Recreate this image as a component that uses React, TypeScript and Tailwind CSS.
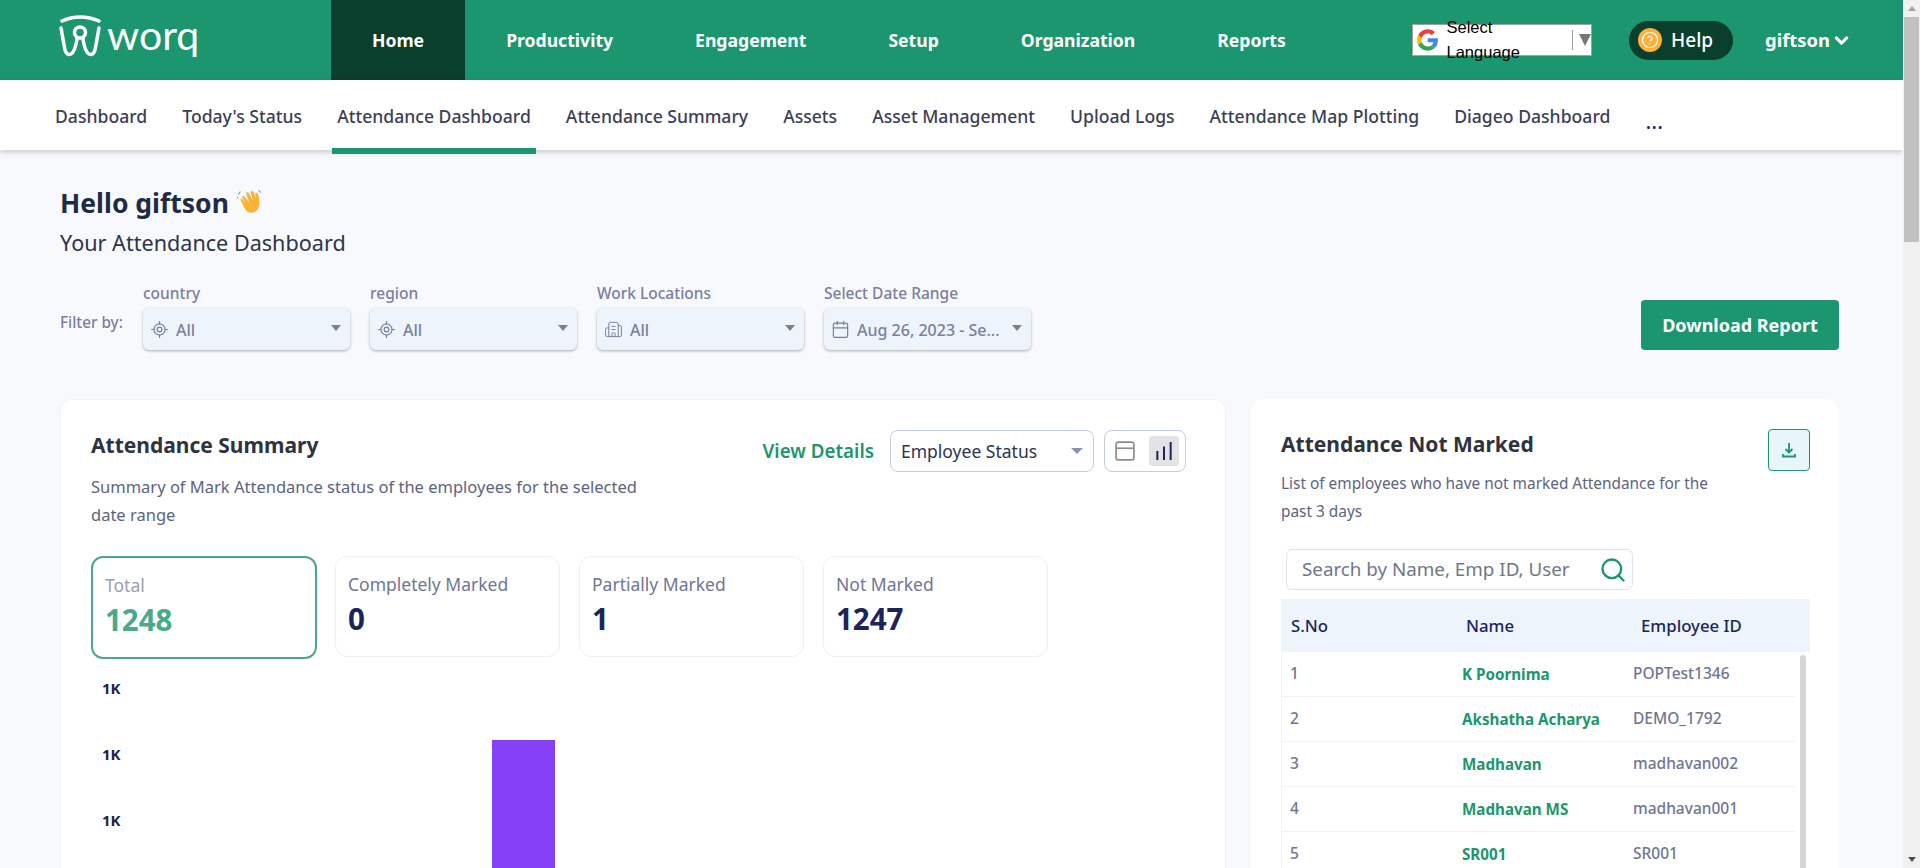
import React from 'react';
import { Building2, Calendar, ChevronDown, CircleHelp, LocateFixed, Search } from 'lucide-react';

const mainTabs = ['Productivity', 'Engagement', 'Setup', 'Organization', 'Reports'];
const subTabs = ['Dashboard', "Today's Status", 'Attendance Dashboard', 'Attendance Summary', 'Assets', 'Asset Management', 'Upload Logs', 'Attendance Map Plotting', 'Diageo Dashboard'];
const stats = [
  { label: 'Completely Marked', value: '0' },
  { label: 'Partially Marked', value: '1' },
  { label: 'Not Marked', value: '1247' },
];
const rows = [
  { no: 1, name: 'K Poornima', id: 'POPTest1346' },
  { no: 2, name: 'Akshatha Acharya', id: 'DEMO_1792' },
  { no: 3, name: 'Madhavan', id: 'madhavan002' },
  { no: 4, name: 'Madhavan MS', id: 'madhavan001' },
  { no: 5, name: 'SR001', id: 'SR001' },
];

const Caret = () => <span className="w-0 h-0 border-x-[5px] border-x-transparent border-t-[6px] border-t-[#808080]" />;

const Logo = () => (
  <div className="flex items-start w-[331px] pl-[58px]">
    <svg width="44" height="46" viewBox="0 0 44 46" fill="none" stroke="white" strokeWidth="3.5" strokeLinecap="round" className="mt-[14px]">
      <path d="M4 7 Q22 -1 41 7" />
      <path d="M3 14 L7 36 Q9 42 13 40 Q17 38 19 25" />
      <path d="M25 25 Q27 38 31 40 Q35 42 37 36 L41 14" />
      <circle cx="22" cy="18.500" r="5.500" />
    </svg>
    <span className="ml-[5px] mt-[10px] font-['Lato',sans-serif] text-[41px] leading-[50px] text-white">worq</span>
  </div>
);

const GoogleG = () => (
  <svg width="22" height="22" viewBox="0 0 48 48">
    <path fill="#EA4335" d="M24 9.5c3.5 0 6.7 1.2 9.2 3.600l6.900-6.900C35.900 2.400 30.400 0 24 0 14.600 0 6.500 5.400 2.600 13.200l8 6.200C12.500 13.700 17.800 9.500 24 9.500z" />
    <path fill="#4285F4" d="M46.900 24.500c0-1.600-.1-3.100-.4-4.500H24v9h12.900c-.6 3-2.200 5.500-4.800 7.200l7.700 6c4.500-4.200 7.100-10.300 7.100-17.700z" />
    <path fill="#FBBC05" d="M10.500 28.600c-.5-1.400-.8-3-.8-4.600s.3-3.200.8-4.600l-8-6.200C.9 16.500 0 20.100 0 24s.9 7.500 2.600 10.800l7.900-6.200z" />
    <path fill="#34A853" d="M24 48c6.500 0 11.900-2.100 15.900-5.800l-7.700-6c-2.200 1.500-5 2.300-8.200 2.300-6.200 0-11.500-4.200-13.400-9.900l-8 6.200C6.500 42.600 14.600 48 24 48z" />
  </svg>
);

const Wave = () => (
  <svg width="27" height="27" viewBox="0 0 24 24" className="ml-[7px] mb-[4px]">
    <path fill="#F9B233" d="M7 7 L12 13 L9 5 Q9 3.500 11 4 L15 11 L13 3.500 Q13.500 2 15.500 3 L18 10 L17 5 Q18 3.500 19.500 5 Q21.500 11 20.500 16 Q19 22 13.500 22 Q9.500 22 7.500 17.500 L4 10.500 Q4 9 5.500 9.500 L9 14 L5.500 8 Q5.500 6.500 7 7 Z" />
    <path fill="none" stroke="#9aa3b5" strokeWidth="1" d="M2 6 L4 3 M1 9 L2 8 M20 2 L22 4" />
  </svg>
);

const FilterSelect = ({ label, icon, value }: { label: string; icon: React.ReactNode; value: string }) => (
  <div className="w-[207px]">
    <div className="text-[15.500px] leading-[20px] font-medium text-[#7a7f9d] mb-[5px]">{label}</div>
    <div className="h-[42px] flex items-center pl-[7px] pr-[9px] rounded-[6px] bg-[#edf4fc] shadow-[0_1px_3px_rgba(0,0,0,0.3)] text-[#7a7f9d]">
      {icon}
      <span className="ml-[7px] mt-[2px] text-[16px] font-medium flex-1 whitespace-nowrap">{value}</span>
      <span className="mb-[3px] flex"><Caret /></span>
    </div>
  </div>
);

const StatCard = ({ label, value }: { label: string; value: string }) => (
  <div className="w-[225px] h-[101px] mr-[19px] rounded-[12px] border border-[#eef0f4] px-[12px] pt-[15px]">
    <div className="text-[17.500px] leading-[24px] text-[#6f7694]">{label}</div>
    <div className="text-[29.500px] leading-[36px] font-bold text-[#1b2559] mt-[5px]">{value}</div>
  </div>
);

export default function App() {
  return (
    <div className="flex h-[868px] overflow-hidden font-['Noto_Sans',sans-serif] bg-[#f7f9fd]">
      <div className="flex-1 min-w-0 flex flex-col">
        <header className="h-[80px] shrink-0 flex items-stretch bg-[#1b966e] text-white">
          <Logo />
          <nav className="flex items-stretch text-[17.600px] font-bold">
            <a className="flex items-center px-[41px] bg-[#0a3f2e]">Home</a>
            {mainTabs.map((tab) => (
              <a key={tab} className="flex items-center px-[41px]">{tab}</a>
            ))}
          </nav>
          <div className="ml-auto flex items-center pr-[51px]">
            <div className="h-[32px] w-[180px] flex items-center bg-white border border-[#a0a0a0] pl-[4px] text-black font-['Liberation_Sans',sans-serif] text-[16.500px]">
              <GoogleG />
              <span className="ml-[8px]">Select Language</span>
              <span className="ml-[5px] h-[20px] border-l border-[#a0a0a0]" />
              <span className="ml-[6px] w-0 h-0 border-x-[6px] border-x-transparent border-t-[12px] border-t-[#777]" />
            </div>
            <button className="ml-[37px] h-[39px] w-[104px] rounded-full bg-[#0a3f2e] flex items-center pl-[9px] text-[19px] font-medium">
              <span className="w-[24px] h-[24px] rounded-full bg-[#fbb03b] flex items-center justify-center">
                <CircleHelp size={18} strokeWidth={1.5} color="white" />
              </span>
              <span className="ml-[9px]">Help</span>
            </button>
            <span className="ml-[32px] text-[18.400px] font-bold">giftson</span>
            <ChevronDown size={21} strokeWidth={3.5} className="ml-[1px]" />
          </div>
        </header>

        <div className="h-[70px] shrink-0 flex bg-white shadow-[0_2px_6px_rgba(0,0,0,0.2)] pl-[50px] text-[17.600px] text-[#3a3f55]">
          {subTabs.map((tab) => (
            <a key={tab} className="relative flex items-center px-[5px] mr-[25px] pt-[3px] font-medium">
              {tab}
              {tab === 'Attendance Dashboard' && <span className="absolute left-0 right-0 bottom-[-4px] h-[6px] bg-[#1b966e]" />}
            </a>
          ))}
          <span className="flex items-center mt-[10px] ml-[5px] text-[22px] text-[#1b2559]">...</span>
        </div>

        <main className="flex-1 min-h-0 pl-[60px] pr-[64px] pt-[36px]">
          <div className="flex items-center h-[34px]">
            <h1 className="text-[26.500px] leading-[34px] font-bold text-[#1f2a44]">Hello giftson</h1>
            <Wave />
          </div>
          <div className="text-[21.600px] leading-[28px] mt-[9px] text-[#2f3447]">Your Attendance Dashboard</div>

          <div className="flex items-end mt-[26px]">
            <span className="w-[83px] text-[15.300px] leading-[20px] font-medium text-[#7a7f9d] mb-[18px]">Filter by:</span>
            <div className="flex gap-[20px]">
              <FilterSelect label="country" value="All" icon={<LocateFixed size={19} strokeWidth={1.5} />} />
              <FilterSelect label="region" value="All" icon={<LocateFixed size={19} strokeWidth={1.5} />} />
              <FilterSelect label="Work Locations" value="All" icon={<Building2 size={19} strokeWidth={1.25} />} />
              <FilterSelect label="Select Date Range" value="Aug 26, 2023 - Se..." icon={<Calendar size={19} strokeWidth={1.5} />} />
            </div>
            <button className="ml-auto h-[50px] w-[198px] rounded-[4px] bg-[#1b966e] text-white text-[18px] font-bold">Download Report</button>
          </div>

          <div className="flex gap-[25px] mt-[49px] items-start">
            <section className="w-[1166px] h-[600px] bg-white rounded-[12px] border border-[#f0f2f6] pl-[30px] pr-[39px] pt-[30px]">
              <div className="flex items-start justify-between">
                <div className="w-[560px]">
                  <h2 className="text-[21px] leading-[30px] font-bold text-[#2f3340]">Attendance Summary</h2>
                  <p className="text-[16.500px] leading-[28px] text-[#5c6480] mt-[13px]">Summary of Mark Attendance status of the employees for the selected date range</p>
                </div>
                <div className="flex items-center">
                  <a className="text-[18.800px] font-semibold text-[#1b966e] mr-[16px]">View Details</a>
                  <div className="w-[204px] h-[42px] rounded-[8px] border border-[#c5cde3] flex items-center justify-between pl-[10px] pr-[7px] text-[17.500px] text-[#2b3352]">
                    Employee Status
                    <span className="w-0 h-0 border-x-[6px] border-x-transparent border-t-[6px] border-t-[#8a94b0] mr-[3px]" />
                  </div>
                  <div className="ml-[10px] w-[82px] h-[42px] rounded-[8px] border border-[#c5cde3] flex items-center pl-[10px] gap-[14px]">
                    <svg width="20" height="20" viewBox="0 0 18 18" fill="none" stroke="#8c8c8c" strokeWidth="1.5">
                      <rect x="1" y="1" width="16" height="16" rx="2" />
                      <path d="M1 6.500H17" />
                    </svg>
                    <span className="w-[30px] h-[30px] rounded-[4px] bg-[#e3e3e6] flex items-center justify-center">
                      <svg width="20" height="20" viewBox="0 0 18 18" fill="none" stroke="#1b2559" strokeWidth="1.800">
                        <path d="M3 17V9M9 17V5M15 17V1" />
                      </svg>
                    </span>
                  </div>
                </div>
              </div>

              <div className="flex mt-[27px]">
                <div className="w-[226px] h-[103px] mr-[18px] rounded-[12px] border-2 border-[#4aa987] px-[12px] pt-[15px]">
                  <div className="text-[17.500px] leading-[24px] text-[#9a9db5]">Total</div>
                  <div className="text-[29.500px] leading-[36px] font-bold text-[#4aa987] mt-[5px]">1248</div>
                </div>
                {stats.map((s) => (
                  <StatCard key={s.label} label={s.label} value={s.value} />
                ))}
              </div>

              <div className="flex mt-[20px]">
                <div className="w-[401px] pl-[11px] text-[15px] leading-[18px] font-bold text-[#1f2340]">
                  <div className="mb-[48px]">1K</div>
                  <div className="mb-[48px]">1K</div>
                  <div>1K</div>
                </div>
                <div className="w-[63px] h-[200px] mt-[61px] bg-[#8540f5]" />
              </div>
            </section>

            <section className="w-[587px] h-[600px] bg-white rounded-[12px] pl-[30px] pr-[28px] pt-[30px]">
              <div className="flex items-start justify-between">
                <div className="w-[435px]">
                  <h2 className="text-[21px] leading-[30px] font-bold text-[#2f3340]">Attendance Not Marked</h2>
                  <p className="text-[15.400px] leading-[28px] text-[#5c6480] mt-[11px]">List of employees who have not marked Attendance for the past 3 days</p>
                </div>
                <button className="w-[42px] h-[42px] rounded-[4px] border border-[#1b966e] bg-[#e8f6fc] flex items-center justify-center">
                  <svg width="18" height="18" viewBox="0 0 18 18" fill="none" stroke="#1b966e" strokeWidth="1.800">
                    <path d="M9 2V11M5.500 8L9 11.500L12.500 8M3 13V15.500H15V13" />
                  </svg>
                </button>
              </div>

              <div className="ml-[5px] mt-[23px] w-[347px] h-[41px] rounded-[6px] border border-[#dfe3ec] flex items-center justify-between pl-[15px] pr-[5px] text-[18.800px] text-[#6f7787]">
                Search by Name, Emp ID, User
                <Search size={28} strokeWidth={2} color="#1b966e" />
              </div>

              <div className="mt-[9px] h-[53px] flex items-center bg-[#edf4fc] text-[16.800px] font-medium text-[#1b2559]">
                <span className="w-[185px] pl-[10px]">S.No</span>
                <span className="w-[175px]">Name</span>
                <span>Employee ID</span>
              </div>
              <div className="flex border-l border-[#f0f2f6]">
                <div className="flex-1">
                  {rows.map((row) => (
                    <div key={row.no} className="h-[45px] flex items-center border-b border-[#f0f2f6] text-[15.500px] font-medium text-[#6f7694]">
                      <span className="w-[180px] pl-[8px]">{row.no}</span>
                      <span className="w-[171px] text-[15.200px] font-bold text-[#1b966e]">{row.name}</span>
                      <span>{row.id}</span>
                    </div>
                  ))}
                </div>
                <div className="w-[15px] flex justify-center pt-[3px]">
                  <div className="w-[6px] h-[300px] rounded-full bg-[#d6d6d6]" />
                </div>
              </div>
            </section>
          </div>
        </main>
      </div>

      <div className="w-[17px] shrink-0 flex flex-col items-center bg-[#f1f1f1]">
        <div className="h-[17px] flex items-center">
          <span className="w-0 h-0 border-x-[4px] border-x-transparent border-b-[5px] border-b-[#a3a3a3]" />
        </div>
        <div className="w-[15px] h-[225px] bg-[#c1c1c1]" />
        <div className="mt-auto h-[17px] flex items-center">
          <span className="w-0 h-0 border-x-[4px] border-x-transparent border-t-[5px] border-t-[#505050]" />
        </div>
      </div>
    </div>
  );
}
